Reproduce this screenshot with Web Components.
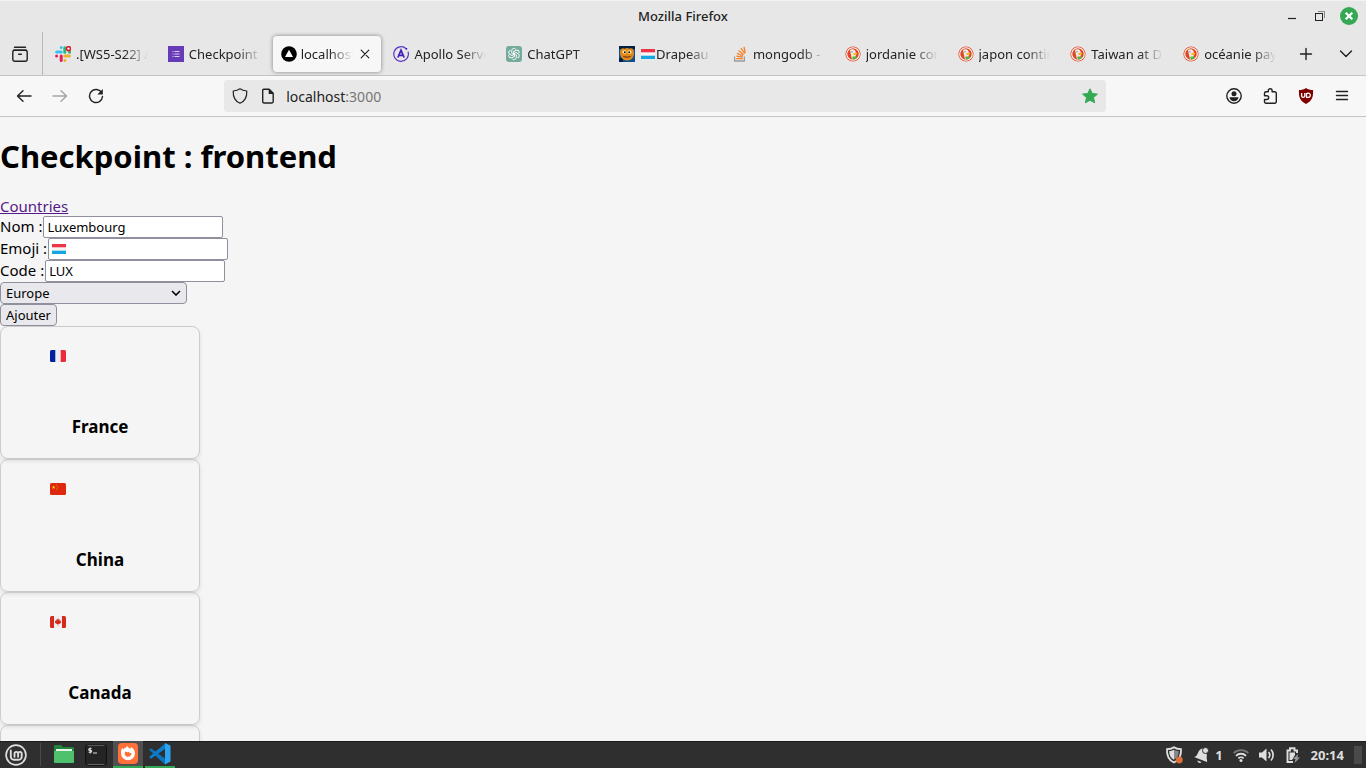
<!DOCTYPE html>
<html lang="fr">
<head>
<meta charset="utf-8">
<title>Mozilla Firefox</title>
<style>
  html, body { margin: 0; height: 100%; }
  body { font-family: "Noto Sans", "Open Sans", sans-serif; color: #000; background: #f5f5f5; overflow: hidden; }
</style>
</head>
<body>
<desktop-screen>
  <title-bar slot="window">Mozilla Firefox</title-bar>
  <tab-strip slot="window">
    <browser-tab icon="slack">.[WS5-S22] Atelier</browser-tab>
    <browser-tab icon="forms">Checkpoint Front</browser-tab>
    <browser-tab icon="triangle" active>localhost:3000</browser-tab>
    <browser-tab icon="apollo">Apollo Server</browser-tab>
    <browser-tab icon="chatgpt">ChatGPT</browser-tab>
    <browser-tab icon="pumpkin" flag="lu">Drapeau du</browser-tab>
    <browser-tab icon="stack">mongodb - How</browser-tab>
    <browser-tab icon="duck">jordanie continent</browser-tab>
    <browser-tab icon="duck">japon continent</browser-tab>
    <browser-tab icon="duck">Taiwan at Duck</browser-tab>
    <browser-tab icon="duck">océanie pays</browser-tab>
  </tab-strip>
  <nav-bar slot="window" host="localhost" port=":3000"></nav-bar>
  <country-page slot="page">
    <country-card flag="fr">France</country-card>
    <country-card flag="cn">China</country-card>
    <country-card flag="ca">Canada</country-card>
    <country-card></country-card>
  </country-page>
  <task-bar slot="panel"></task-bar>
</desktop-screen>

<script>
const S = 'fill="none" stroke="#222" stroke-width="1.4" stroke-linecap="round" stroke-linejoin="round"';
const THIN = S.replace("1.4", "1.2");
const ICONS = {
  archive: [16, `<g ${S}><path d="M2.5 1.2h11M1.5 4.3h13"/><rect x=".8" y="4.3" width="14.4" height="11" rx="2"/><path d="M6.7 8.2h2.6"/></g>`],
  slack: [16, `<g stroke-width="3" stroke-linecap="round"><path d="M6.2 1.5v.01M1.6 6h4.6" stroke="#36c5f0"/><path d="M9.8 1.8v4.4" stroke="#2eb67d"/><path d="M14.5 6.2h.01" stroke="#2eb67d"/><path d="M9.8 10h4.6M9.9 14.5h.01" stroke="#ecb22e"/><path d="M6.2 10v4.400M1.600 10h.01" stroke="#e01e5a"/></g><circle cx="13.500" cy="2.600" r="2" fill="#fff" stroke="#e01e2a" stroke-width="1.600"/>`],
  forms: [16, `<path fill="#673ab7" d="M0 0h16v16H0z"/><path stroke="#d8cdf0" stroke-width="1" d="M4.500 5.500h1M6.500 5.500h5M4.500 8h1M6.500 8h5M4.500 10.500h1M6.500 10.500h5"/>`],
  triangle: [16, `<circle cx="8" cy="8" r="7.800"/><path fill="#fff" d="M8 3.700l4 7.200H4z"/>`],
  apollo: [16, `<path d="M13.200 2.800A7.300 7.300 0 1 0 15.100 6" fill="none" stroke="#5a35c4" stroke-width="1.200" stroke-linecap="round"/><circle cx="13.400" cy="2.800" r=".9" fill="#3f20ba"/><path fill="none" stroke="#3f20ba" stroke-width="1.800" d="M4.900 11.500L8 4.200l3.100 7.300M6.300 9.300h3.400"/>`],
  chatgpt: [16, `<rect width="16" height="16" rx="3" fill="#74aa9c"/><g fill="none" stroke="#fff" stroke-width=".9"><path id="p" d="M8.100 8.600 5.700 7.200V4.600a2.300 2.300 0 0 1 4-1.500"/><use href="#p" transform="rotate(60 8 8)"/><use href="#p" transform="rotate(120 8 8)"/><use href="#p" transform="rotate(180 8 8)"/><use href="#p" transform="rotate(240 8 8)"/><use href="#p" transform="rotate(300 8 8)"/></g>`],
  pumpkin: [16, `<path fill="#0b4f8f" d="M0 0h16v16H0z"/><path fill="#041f40" d="M0 0h16v3H0zM0 12h4v4H0z"/><path fill="#e08a1e" d="M1 6.500C1 2 4 1.500 5.500 2.800 7 1.800 9 1.800 10.500 2.800 13 1.500 15 3 15 7c0 5-3 7.500-7 7.500S1 11 1 6.500z"/><ellipse cx="5.500" cy="6" rx="2" ry="1.700" fill="#fff3b0"/><ellipse cx="10.500" cy="6" rx="2" ry="1.700" fill="#fff3b0"/><circle cx="5.800" cy="6.200" r=".9"/><circle cx="10.200" cy="6.200" r=".9"/><path d="M3.500 9.500c2 1.300 7 1.300 9 0-1 3-8 3-9 0z" fill="#7a2a0a"/>`],
  stack: [16, `<path d="M2.600 10.500v4.500h9.800v-4.500" fill="none" stroke="#9a9c9f" stroke-width="1.300"/><g stroke="#f48024" stroke-width="1.300"><path d="M4.200 12.700h6.600M4.300 10.200l6.500 1M5 7.400l6 2.600M6.600 4.600l5 4.100M9 2.200l3.700 5.300M12 .8l1.300 6"/></g>`],
  duck: [16, `<circle cx="8" cy="8" r="7.600" fill="#de4826"/><circle cx="8" cy="8" r="6.300" fill="none" stroke="#fff" stroke-width="1.100"/><path fill="#f3ece8" d="M5 4.200c1.500-1.400 4-1.200 5 .4.800 1.200 1 2 .9 3.400l-.4 4.600-3.400.8L6 9z"/><path fill="#f9b51e" d="M8.300 7l3.800-.3-.2 1.800-3.400.8z"/><path fill="#4cba3c" d="M7.200 10.800l4.200-.6-.3 2.600-3.400.8z"/><circle cx="7" cy="5.800" r=".6" fill="#2d4f8e"/>`],
  close: [16, `<path ${THIN} d="M4.200 4.200l7.600 7.600M11.800 4.200l-7.600 7.600"/>`],
  plus: [16, `<path ${S} d="M8 2.500v11M2.500 8h11"/>`],
  chevron: [16, `<path ${S} d="M2.500 5l5.500 5.500L13.500 5"/>`],
  back: [16, `<path ${S} d="M15 8H1.500M7 2.800L1.500 8 7 13.200"/>`],
  forward: [16, `<path ${S} style="stroke:#a5a5a5" d="M1 8h13.500M9 2.800L14.500 8 9 13.200"/>`],
  reload: [16, `<path ${S} d="M13.600 4.700A6.500 6.500 0 1 0 14.500 8.500"/><path fill="#222" d="M14.800 1v5.500H9.300z"/>`],
  shield: [16, `<path ${THIN} d="M8 .8c2 1.400 4.200 2 6.800 2.200C15 9 12.800 13.400 8 15.300 3.200 13.400 1 9 1.200 3 3.800 2.800 6 2.200 8 .8z"/>`],
  page: [16, `<path ${S} d="M3.700 1.300h5.500l4 4v8.200a1.500 1.500 0 0 1-1.500 1.500h-7.500a1.500 1.500 0 0 1-1.500-1.500V2.300a1 1 0 0 1 1-1z"/><path fill="#222" d="M8.700 1l5 5h-5z"/>`],
  star: [16, `<path fill="#35a854" stroke="#35a854" stroke-linejoin="round" d="M8 .8l2.200 4.700 5.200.6-3.900 3.500 1.100 5.200L8 12.200l-4.600 2.600 1.100-5.200L.6 6.100l5.200-.6z"/>`],
  account: [16, `<circle cx="8" cy="8" r="7.200" ${S}/><circle cx="8" cy="5.800" r="2.500" fill="#222"/><path fill="#222" d="M3.500 9.300h9c0 2.200-2 4-4.500 4s-4.500-1.800-4.500-4z"/>`],
  puzzle: [16, `<path ${S} d="M6.300 3.700V2.600a1.900 1.900 0 0 1 3.800 0v1.100h2.700a1.500 1.500 0 0 1 1.500 1.500v8.600a1.500 1.500 0 0 1-1.500 1.500H4a1.500 1.500 0 0 1-1.500-1.500v-2.300h2.300a1.900 1.900 0 0 0 0-3.800H2.500V5.200A1.500 1.500 0 0 1 4 3.700z"/>`],
  ublock: [16, `<path fill="#800000" d="M8 0c2 1.400 4.300 2 7 2 .5 7-1 11-7 14C2 13 .5 9 1 2c2.700 0 5-.6 7-2z"/><path fill="none" stroke="#fff" stroke-width="1.300" d="M3.600 5v2.700a1.600 1.600 0 0 0 3.200 0V5M8.500 5v4.300h1.700a2.100 2.100 0 1 0-1.700-3.300"/>`],
  menu: [16, `<path ${S} d="M2.500 3.500h11M2.500 7.500h11M2.500 11.500h11"/>`],
  min: [16, `<path stroke="#222" stroke-width="1.200" d="M4 10.500h8"/>`],
  max: [16, `<path fill="none" stroke="#888" d="M6 3.500h6.500V10"/><rect x="3.500" y="5.500" width="7" height="7" fill="none" stroke="#222"/>`],
  quit: [18, `<circle cx="9" cy="9" r="9" fill="#35a854"/><path stroke="#fff" stroke-width="2.200" d="M5.700 5.700l6.600 6.600M12.300 5.700l-6.600 6.600"/>`],
  mint: [22, `<circle cx="11" cy="11" r="9.900" fill="none" stroke="#dedede" stroke-width="1.700"/><path fill="none" stroke="#dedede" stroke-width="1.900" stroke-linecap="round" d="M5.800 6.500v6.300a3 3 0 0 0 3 3h4.900a3 3 0 0 0 3-3V9.700a1.800 1.800 0 0 0-3.600 0v3M13.100 9.700a1.800 1.800 0 0 0-3.600 0v3"/>`],
  folder: [22, `<path fill="#22833b" d="M1 2a1 1 0 0 1 1-1h6l2 2h10a1 1 0 0 1 1 1v9H1z"/><path fill="#e8f3ea" d="M3 5h16v4H3z"/><path fill="#4fc06b" d="M1 7h20v11a1 1 0 0 1-1 1H2a1 1 0 0 1-1-1z"/>`],
  term: [22, `<rect x=".5" y=".5" width="21" height="21" rx="3" fill="#242424" stroke="#111"/><path stroke="#666" d="M2.500 1.300h17M2.500 20.500h17"/><path fill="none" stroke="#ddd" stroke-width="1.100" d="M6.500 4.500H4.700a.9.9 0 0 0 0 1.900h1a.9.9 0 0 1 0 1.900H3.600M5.200 3.400v6M8 9h4"/>`],
  firefox: [22, `<rect x="1" y="0" width="20" height="21" rx="4" fill="#ff7139"/><path fill="#fff" fill-rule="evenodd" d="M5 5l1.300 1.300C7 5.300 8 5 8.500 5 9 4 9.500 3.500 10.500 3c0 1.500 2 2 3 3l.5-2c2.500 1.500 4 4 4 6.300a7 7 0 0 1-14 0C4 8 4.400 6.500 5 5zM8.300 8.500c-1.600 3 .2 5.300 2.700 5.300 2.300 0 3.900-1.700 3.500-4-1 .8-2 .2-2.600-.8-1.200.3-2.500.2-3.600-.5z"/>`],
  vscode: [22, `<path fill="#0b74bd" d="M0 6.800l2-1.500L16 15.500V21.500z"/><path fill="#0e7cc9" d="M0 14l2 1.800L16 6V.5z"/><path fill="#2ca3ee" d="M16 0l5.500 2.600v16L16 21.500z"/>`],
  guard: [18, `<path fill="none" stroke="#dedede" stroke-width="1.800" d="M9 1.200c2 1.500 4.500 2 7 2 .4 6.500-1.500 10.800-7 13.300C3.500 14 1.600 9.700 2 3.200c2.500 0 5-.5 7-2z"/><path fill="#dedede" d="M9 3.800v10C5.500 12 4.200 9 4.200 5 6 5 7.600 4.700 9 3.800z"/><path fill="#888" d="M9 3.800v10c3.500-1.800 4.800-4.800 4.800-8.800-1.800 0-3.400-.3-4.800-1.200z"/><circle cx="14.300" cy="14" r="3.400" fill="#e07038"/>`],
  bell: [16, `<path fill="#dedede" d="M1 10c5-.5 3-8.500 9.500-8.500L14 8c-1 4 .5 5 0 7zM4.500 13.500l4 1.500a2.200 2.200 0 0 1-4-1.500z"/><circle cx="12.500" cy="3.500" r="3" fill="#dedede" stroke="#2f2f2f"/>`],
  wifi: [16, `<g fill="none" stroke-width="1.900"><path stroke="#777" d="M.6 6.200a10.500 10.500 0 0 1 14.800 0"/><path stroke="#dedede" d="M3 8.800a7 7 0 0 1 10 0M5.400 11.400a3.700 3.700 0 0 1 5.200 0"/></g><circle cx="8" cy="13.600" r="1.500" fill="#dedede"/>`],
  sound: [16, `<path fill="#dedede" d="M0 5.500h3L7.500 1.500v13L3 10.500H0z"/><path fill="none" stroke="#dedede" stroke-width="1.700" d="M9.500 5a4.500 4.500 0 0 1 0 6M12 2.500a8.200 8.200 0 0 1 0 11"/>`],
  battery: [16, `<path fill="none" stroke="#dedede" stroke-width="1.900" d="M8 15H2.500V3.500H5V1.200h4.500v2.300H12V6"/><path fill="#dedede" d="M4.500 5.500h5.500V8L7 13H4.500z"/><path fill="#999" d="M13 7l-5 5h2.500L9.500 16l5.500-5.500h-2.500z"/>`],
  lu: [16, `<path fill="#f4f4f4" d="M1 3h14v10H1z"/><path fill="#ee3344" d="M1 3h14v3.300H1z"/><path fill="#14a5e3" d="M1 9.700h14V13H1z"/>`],
  fr: [16, `<defs><clipPath id="c"><rect y="2" width="16" height="12" rx="1.500"/></clipPath></defs><g clip-path="url(#c)"><path fill="#eee" d="M0 2h16v12H0z"/><path fill="#00209f" d="M0 2h5.300v12H0z"/><path fill="#ee2a3a" d="M10.700 2H16v12h-5.300z"/></g>`],
  cn: [16, `<rect y="2" width="16" height="12" rx="1.500" fill="#de2910"/><path fill="#ffde00" d="M3.600 4.500l.5 1.300h1.300l-1 .8.400 1.300-1.200-.8-1.200.8.400-1.300-1-.8h1.300z"/><path stroke="#f0a000" stroke-width=".8" d="M6 4h.8M7.200 5.300H8M7.200 7H8M6 8.200h.8"/>`],
  ca: [16, `<defs><clipPath id="c"><rect y="2" width="16" height="12" rx="1.500"/></clipPath></defs><g clip-path="url(#c)"><path fill="#eee" d="M0 2h16v12H0z"/><path fill="#d52b1e" d="M0 2h4v12H0zM12 2h4v12h-4zM8 4.200l.8 1.500 1-.5-.2 1.700 1.600-.3-.4 1.200.5.600-2 1.700-1-.1.100 1.500h-.8l.1-1.500-1 .1-2-1.700.5-.6-.4-1.200 1.600.3-.2-1.700 1 .5z"/></g>`]
};

class Base extends HTMLElement {
  connectedCallback() {
    if (this.shadowRoot) return;
    this.attachShadow({ mode: "open" }).innerHTML = this.view();
  }
}
const define = (name, view) => customElements.define(name, class extends Base { view() { return view(this); } });

define("ui-icon", el => {
  const [box, art] = ICONS[el.getAttribute("name")];
  return `<style>:host{display:block;flex:none;width:${box}px;height:${box}px}svg{display:block;width:100%;height:100%}</style>
  <svg viewBox="0 0 ${box} ${box}" aria-hidden="true">${art}</svg>`;
});

define("desktop-screen", () => `<style>
  :host{display:flex;flex-direction:column;height:100vh}
  main{flex:1;min-height:0;overflow:hidden}
  </style><slot name="window"></slot><main><slot name="page"></slot></main><slot name="panel"></slot>`);

define("title-bar", () => `<style>
  :host{display:grid;grid-template-columns:1fr auto 1fr;align-items:center;height:32px;background:#e7e7e7;box-shadow:inset 0 1px #f2f2f2;font:500 13px "Noto Sans",sans-serif;color:#222}
  .name{grid-column:2}
  .buttons{display:flex;justify-content:flex-end;align-items:center;gap:12px;padding-right:8px}
  button{border:0;padding:0;background:none}
  </style><span class="name"><slot></slot></span>
  <div class="buttons"><button aria-label="Réduire"><ui-icon name="min"></ui-icon></button><button aria-label="Restaurer"><ui-icon name="max"></ui-icon></button><button aria-label="Fermer"><ui-icon name="quit"></ui-icon></button></div>`);

define("tab-strip", () => `<style>
  :host{display:flex;height:43px;background:#e7e7e7;border-bottom:1px solid #c4c4c4}
  button{display:grid;place-items:center;border:0;padding:0;background:none;width:40px}
  .view{width:43px;padding-right:2px;border-right:1px solid #b8b8b8;box-sizing:border-box}
  .tabs{flex:1;display:flex;min-width:0;padding-left:2px}
  </style><button class="view" aria-label="Firefox View"><ui-icon name="archive"></ui-icon></button>
  <div class="tabs" role="tablist"><slot></slot></div>
  <button aria-label="Nouvel onglet"><ui-icon name="plus"></ui-icon></button>
  <button aria-label="Lister les onglets"><ui-icon name="chevron"></ui-icon></button>`);

define("browser-tab", el => `<style>
  :host{display:block;flex:1;min-width:0;padding:4px 2px 3px;font-size:13px;color:#222}
  .tab{display:flex;align-items:center;gap:5px;height:36px;padding:0 8px;border-radius:4px}
  :host([active]) .tab{background:#f7f7f7;box-shadow:0 0 4px rgba(0,0,0,.45);gap:4px}
  .text{flex:1;min-width:0;display:flex;align-items:center;overflow:hidden;white-space:nowrap;mask-image:linear-gradient(to left,transparent,#000 24px)}
  button{border:0;padding:0;background:none}
  </style><div class="tab" role="tab"><ui-icon name="${el.getAttribute("icon")}"></ui-icon>
  <span class="text">${el.hasAttribute("flag") ? `<ui-icon name="${el.getAttribute("flag")}"></ui-icon>` : ""}<slot></slot></span>
  ${el.hasAttribute("active") ? `<button aria-label="Fermer l'onglet"><ui-icon name="close"></ui-icon></button>` : ""}</div>`);

define("nav-bar", el => `<style>
  :host{display:flex;align-items:center;height:40px;padding:0 6px;background:#f7f7f7;border-bottom:1px solid #c4c4c4}
  button{display:grid;place-items:center;width:36px;height:32px;border:0;padding:0;background:none}
  i{flex:1}
  .url{flex:8;display:flex;align-items:center;height:32px;gap:12px;margin:0 2px;padding:0 8px;background:#e8e8e8;border-radius:4px;font-size:14px;color:#222}
  .url span{flex:1}
  .url .port{color:#777}
  .text{margin-left:-2px}
  </style><button aria-label="Précédent"><ui-icon name="back"></ui-icon></button><button aria-label="Suivant"><ui-icon name="forward"></ui-icon></button><button aria-label="Actualiser"><ui-icon name="reload"></ui-icon></button>
  <i></i><div class="url"><ui-icon name="shield"></ui-icon><ui-icon name="page"></ui-icon><span class="text">${el.getAttribute("host")}<span class="port">${el.getAttribute("port")}</span></span><ui-icon name="star"></ui-icon></div><i></i>
  <button aria-label="Compte"><ui-icon name="account"></ui-icon></button><button aria-label="Extensions"><ui-icon name="puzzle"></ui-icon></button><button aria-label="uBlock"><ui-icon name="ublock"></ui-icon></button><button aria-label="Menu"><ui-icon name="menu"></ui-icon></button>`);

define("country-page", () => `<style>
  :host{display:block;font-size:15px}
  h1{margin:0;padding:19px 0 21px;font-size:31px;line-height:40px}
  a{display:block;width:max-content;color:#551a8b;line-height:19px}
  .row{display:flex;height:22px;align-items:center;gap:1px}
  label{line-height:20px;padding-bottom:2px}
  .field{position:relative}
  .field ui-icon{position:absolute;left:3px;top:3px}
  input,select,button{display:block;box-sizing:border-box;height:22px;margin:0;font:13px "Noto Sans",sans-serif;color:#000;border:1px solid #8f8f9d}
  input{width:180px;padding:0 3px;background:#fff;border-radius:2px}
  select{appearance:none;width:187px;padding:0 5px;border-radius:4px;background:#e9e9ed url("data:image/svg+xml,%3Csvg xmlns='http://www.w3.org/2000/svg' width='10' height='6'%3E%3Cpath d='M1 1l4 4 4-4' fill='none' stroke='%23000' stroke-width='1.600'/%3E%3C/svg%3E") no-repeat right 5px center}
  button{padding:0 5px;border-radius:4px;background:#e9e9ed}
  </style><h1>Checkpoint : frontend</h1><a href="#">Countries</a>
  <form>
    <div class="row"><label for="nom">Nom :</label><input id="nom" value="Luxembourg"></div>
    <div class="row"><label for="emoji">Emoji :</label><div class="field"><input id="emoji"><ui-icon name="lu"></ui-icon></div></div>
    <div class="row"><label for="code">Code :</label><input id="code" value="LUX"></div>
    <select aria-label="Continent"><option>Europe</option></select>
    <button type="button">Ajouter</button>
  </form><slot></slot>`);

define("country-card", el => `<style>
  :host{display:flex;flex-direction:column;justify-content:space-between;box-sizing:border-box;width:200px;height:133px;padding:21px 16px 19px;border:1px solid #ccc;border-radius:8px;box-shadow:0 2px 4px rgba(0,0,0,.1)}
  ui-icon{margin-left:33px}
  h2{margin:0;font-size:17px;line-height:24px;text-align:center}
  </style>${el.hasAttribute("flag") ? `<ui-icon name="${el.getAttribute("flag")}"></ui-icon>` : ""}<h2><slot></slot></h2>`);

define("task-bar", () => `<style>
  :host{position:relative;display:flex;align-items:stretch;height:27px;background:#2f2f2f;box-shadow:inset 0 1px #1c1c1c;color:#dedede;font:bold 13px "Noto Sans",sans-serif}
  button{display:grid;place-items:center;box-sizing:border-box;width:30px;border:0;padding:0;background:none}
  .apps,.tray{display:flex;align-items:stretch}
  .apps{flex:1;gap:2px;padding-left:1px}
  .sep{width:1px;margin:2px 6px 2px 7px;background:#4a4a4a}
  .run{border-bottom:2px solid #35a854}
  .on{background:#505050}
  .tray{align-items:center;gap:10px;padding-right:4px}
  .bell{display:flex;align-items:center;gap:6px}
  .peek{width:8px;height:18px;background:#4a4a4a}
  </style><div class="apps"><button aria-label="Menu"><ui-icon name="mint"></ui-icon></button><span class="sep"></span>
  <button aria-label="Fichiers"><ui-icon name="folder"></ui-icon></button><button aria-label="Terminal"><ui-icon name="term"></ui-icon></button><button class="run on" aria-label="Firefox"><ui-icon name="firefox"></ui-icon></button><button class="run" aria-label="Code"><ui-icon name="vscode"></ui-icon></button></div>
  <div class="tray"><ui-icon name="guard"></ui-icon><span class="bell"><ui-icon name="bell"></ui-icon>1</span><ui-icon name="wifi"></ui-icon><ui-icon name="sound"></ui-icon><ui-icon name="battery"></ui-icon><time>20:14</time><span class="peek"></span></div>`);
</script>
</body>
</html>
